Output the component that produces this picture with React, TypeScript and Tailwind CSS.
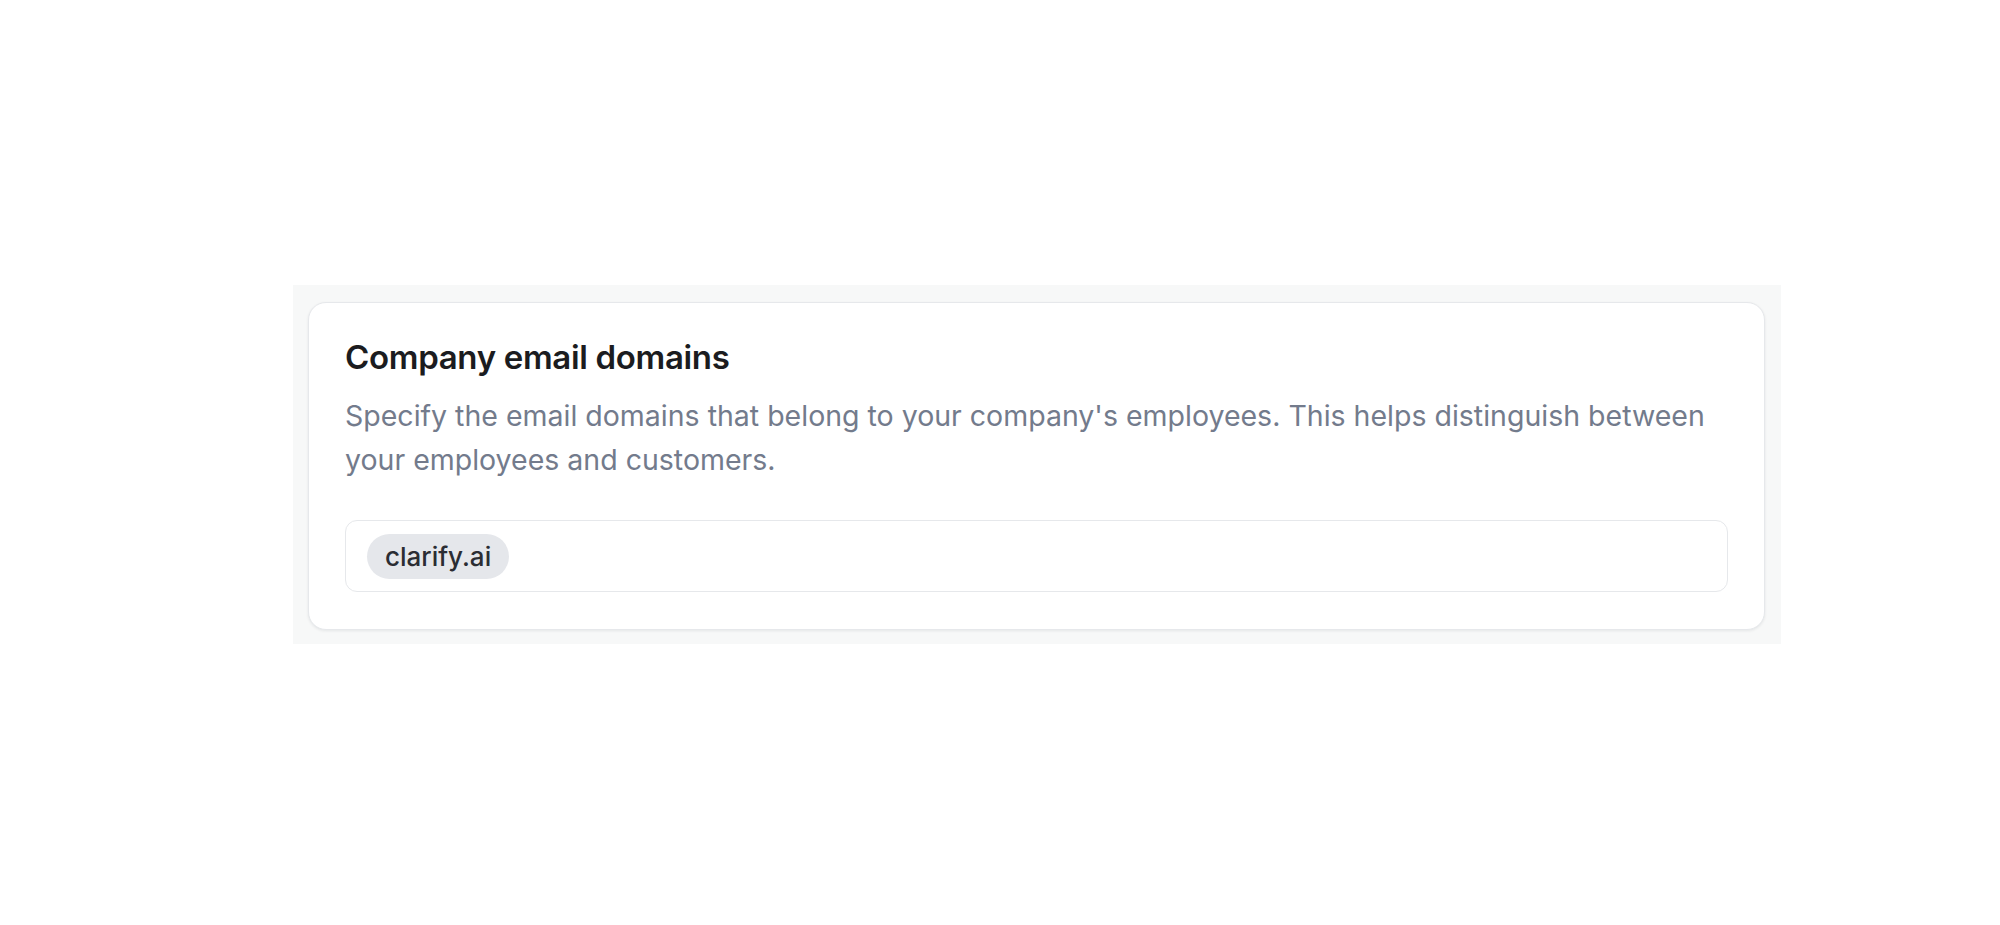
export default function App() {
  return (
    <div className="min-h-[925px] w-full bg-white pt-[285px] pl-[293px] font-['Inter','Noto_Sans',sans-serif]">
      <div className="w-[1488px] bg-[#f7f8f8] pr-[16px] pl-[15px] pt-[17px] pb-[14px]">
        <div className="rounded-[18px] border border-[#e6e8eb] bg-white px-[36px] pt-[34px] pb-[37px] shadow-[0_1px_3px_rgba(16,24,40,0.08)]">
          <h2 className="text-[33px] leading-[40px] font-semibold tracking-[-0.01em] text-[#1b1c20]">
            Company email domains
          </h2>
          <p className="mt-[17px] text-[28.5px] leading-[44px] text-[#737b8c]">
            Specify the email domains that belong to your company's employees. This helps distinguish between
            your employees and customers.
          </p>
          <div className="mt-[38px] flex h-[72px] items-center rounded-[12px] border border-[#e6e8eb] bg-white px-[21px]">
            <span className="inline-flex h-[45px] items-center rounded-full bg-[#e5e7eb] px-[18px] text-[26px] font-medium text-[#2b2d33]">
              clarify.ai
            </span>
          </div>
        </div>
      </div>
    </div>
  );
}
